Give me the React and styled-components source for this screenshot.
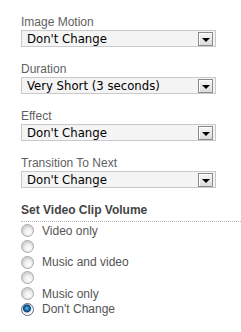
import React from "react";
import styled, { createGlobalStyle } from "styled-components";

const GlobalStyle = createGlobalStyle`
  body {
    margin: 0;
    background: #fff;
    font-family: "Liberation Sans", Arial, sans-serif;
  }
`;

const Panel = styled.div`
  padding: 15px 0 0 21px;
  width: 220px;
`;

const Field = styled.div`
  & + & {
    margin-top: 15px;
  }
`;

const Label = styled.div`
  font-size: 12px;
  line-height: 14px;
  color: #5f5f5f;
  margin-bottom: 1px;
`;

const Select = styled.div`
  box-sizing: border-box;
  width: 195px;
  height: 17px;
  border: 1px solid #c9c9c9;
  background: #f4f4f4;
  display: flex;
  align-items: center;
  justify-content: space-between;
  padding: 0 2px 0 5px;
  .value {
    font-family: "DejaVu Sans Condensed", "DejaVu Sans", sans-serif;
    font-stretch: condensed;
    font-size: 13px;
    line-height: 15px;
    color: #000;
    white-space: nowrap;
  }
`;

const DropButton = styled.span`
  box-sizing: border-box;
  width: 15px;
  height: 14px;
  border: 1px solid #8a8a8a;
  box-shadow: inset 1px 1px 0 #fff;
  background: linear-gradient(#f6f6f6, #dcdcdc);
  display: flex;
  align-items: flex-end;
  justify-content: center;
  padding-bottom: 3px;
  &::after {
    content: "";
    border-left: 4px solid transparent;
    border-right: 4px solid transparent;
    border-top: 4px solid #000;
  }
`;

const Heading = styled.div`
  margin-top: 15px;
  font-size: 12px;
  font-weight: bold;
  line-height: 14px;
  color: #444;
  padding-bottom: 4px;
  border-bottom: 1px dotted #b5b5b5;
`;

const RadioList = styled.div`
  padding-top: 1px;
`;

const RadioRow = styled.label`
  display: flex;
  align-items: center;
  height: 15.7px;
  font-size: 12px;
  color: #555;
`;

const Radio = styled.span`
  box-sizing: border-box;
  width: 13px;
  height: 13px;
  border-radius: 50%;
  border: 1px solid ${(p) => (p.checked ? "#5d6a78" : "#a9a9a9")};
  background: ${(p) =>
    p.checked
      ? "radial-gradient(circle at 45% 40%, #5ec0f0 0, #1a78b8 2px, #0b3f6e 3.5px, #e9e9e9 4.5px, #fdfdfd 6px)"
      : "radial-gradient(circle at 60% 65%, #ffffff 0, #ececec 4px, #d4d4d4 6px)"};
  margin-right: 8px;
  flex-shrink: 0;
`;

const fields = [
  ["Image Motion", "Don't Change"],
  ["Duration", "Very Short (3 seconds)"],
  ["Effect", "Don't Change"],
  ["Transition To Next", "Don't Change"],
];

const options = ["Video only", "", "Music and video", "", "Music only", "Don't Change"];

export default function App() {
  return (
    <>
      <GlobalStyle />
      <Panel>
        {fields.map(([label, value]) => (
          <Field key={label}>
            <Label>{label}</Label>
            <Select>
              <span className="value">{value}</span>
              <DropButton />
            </Select>
          </Field>
        ))}
        <Heading>Set Video Clip Volume</Heading>
        <RadioList>
          {options.map((opt, i) => (
            <RadioRow key={i}>
              <Radio checked={i === options.length - 1} />
              {opt}
            </RadioRow>
          ))}
        </RadioList>
      </Panel>
    </>
  );
}
